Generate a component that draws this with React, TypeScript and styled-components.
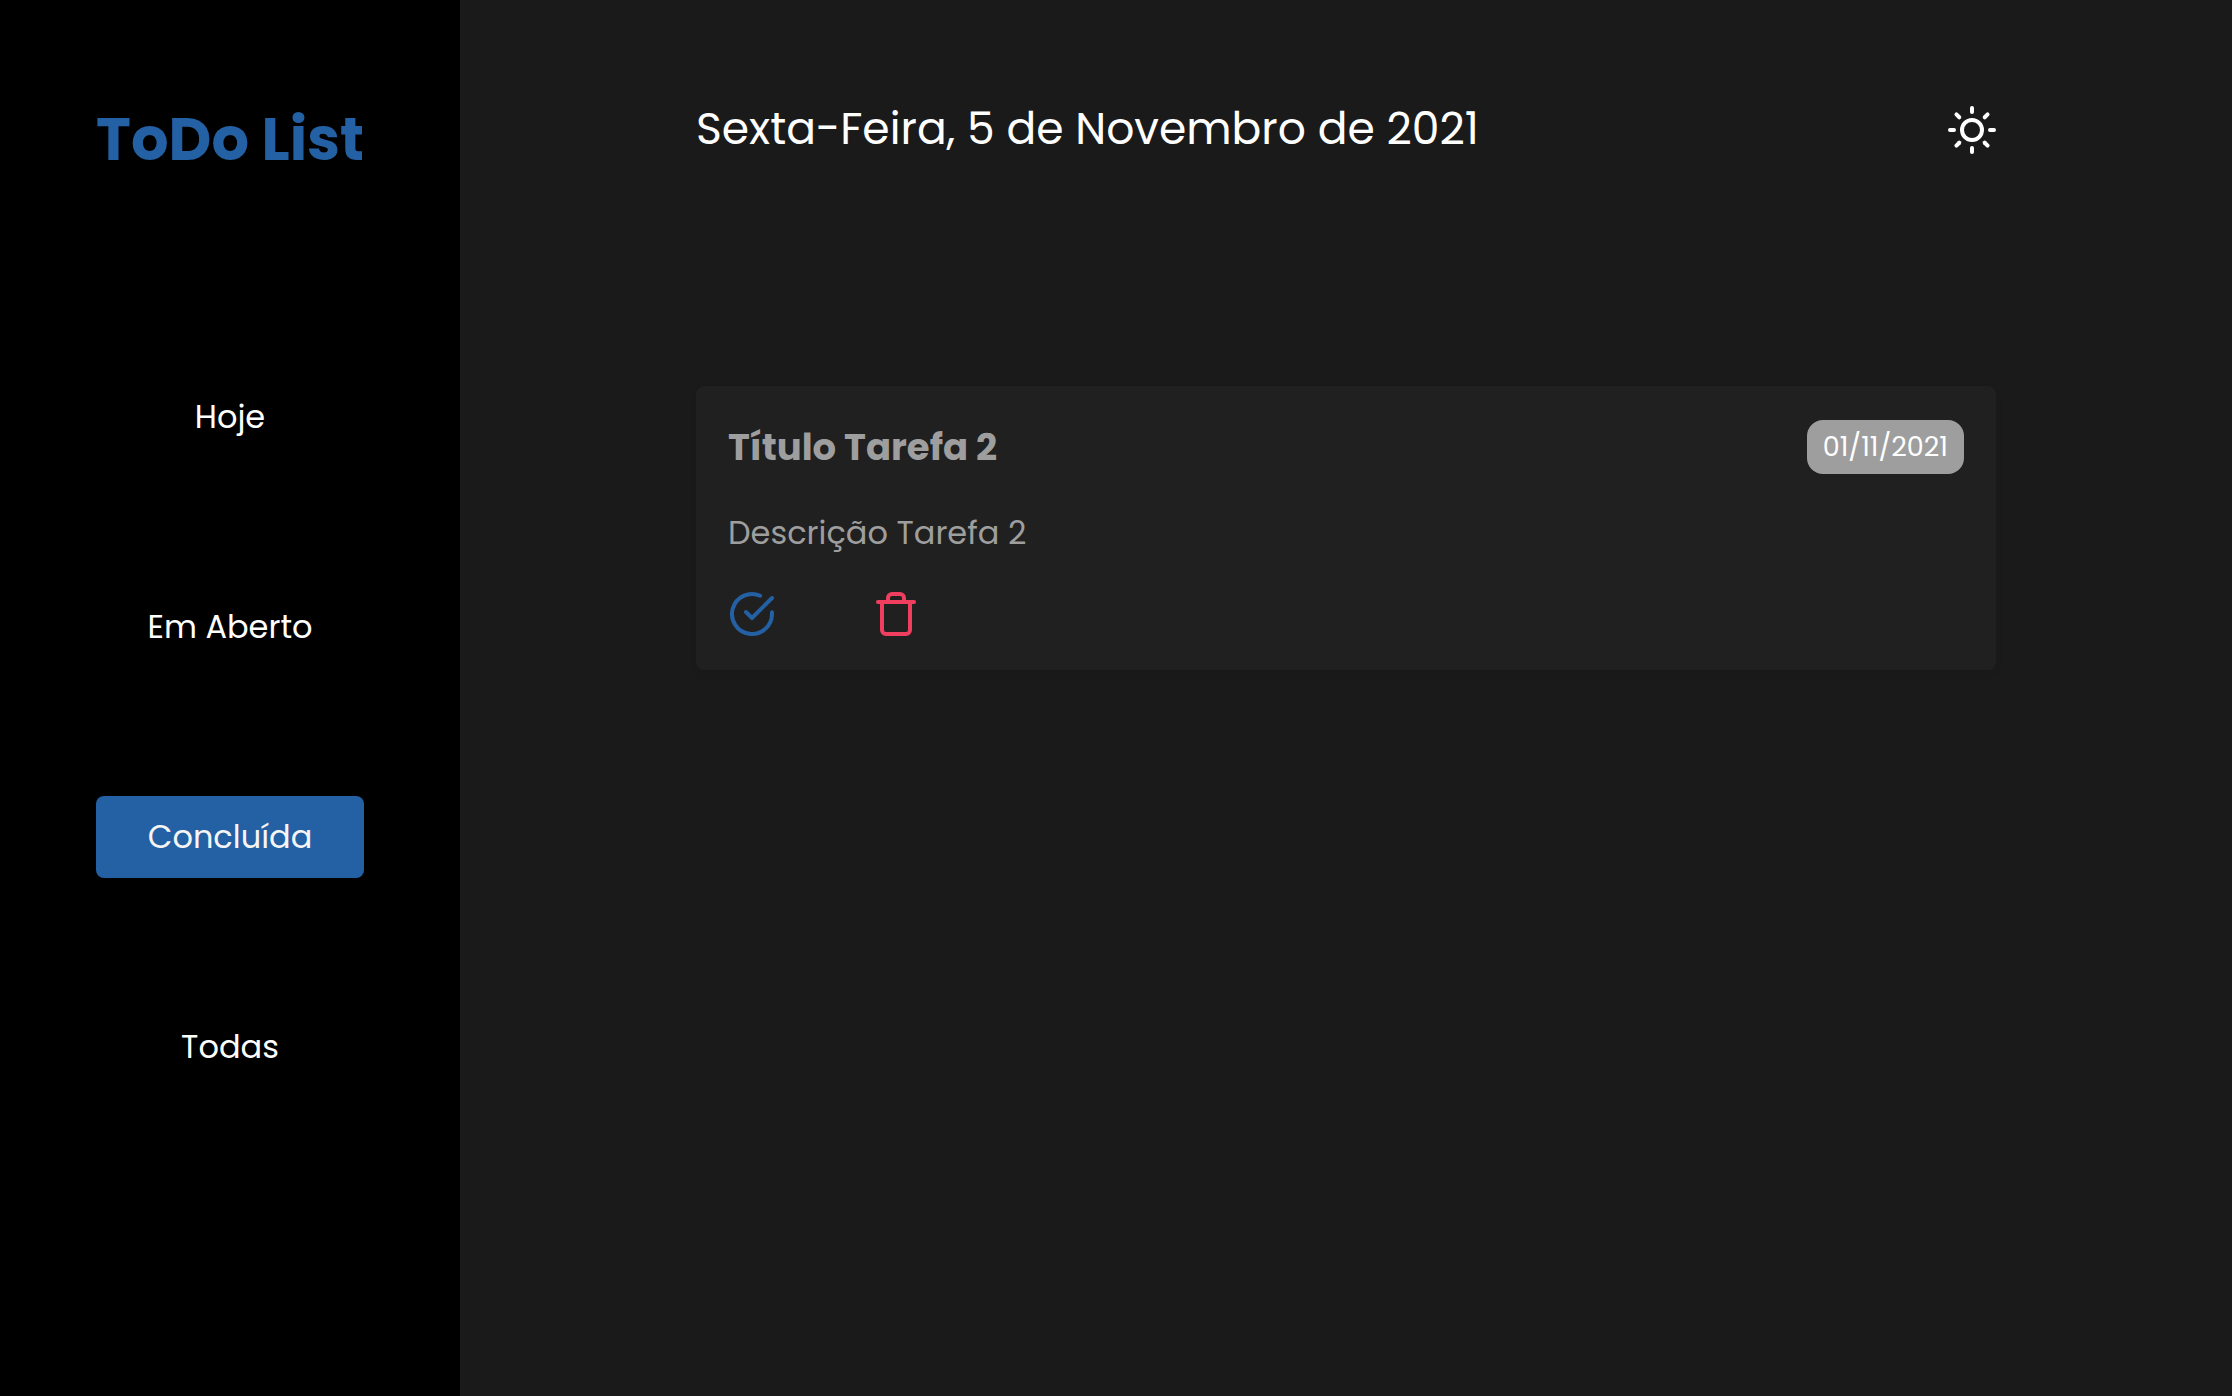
import React, { useState } from "react";
import styled, { createGlobalStyle } from "styled-components";
import { FiCheckCircle, FiSun, FiTrash } from "react-icons/fi";

const GlobalStyle = createGlobalStyle`
  * {
    margin: 0;
    padding: 0;
    box-sizing: border-box;
  }

  body {
    background: #1a1a1a;
    color: #ffffff;
    font-family: Poppins, Inter, "Open Sans", sans-serif;
    font-size: 32px;
  }

  button {
    border: 0;
    background: none;
    color: inherit;
    font: inherit;
    cursor: pointer;
  }
`;

const Layout = styled.div`
  display: grid;
  grid-template-columns: 460px 1fr;
  min-height: 100vh;
`;

const Sidebar = styled.aside`
  padding: 96px;
  background: #000000;
`;

const Brand = styled.h1`
  color: #2460a4;
  font-size: 59px;
  font-weight: 700;
  line-height: 88px;
  text-align: center;
  white-space: nowrap;
`;

const Nav = styled.nav`
  display: flex;
  flex-direction: column;
  gap: 128px;
  margin-top: 192px;
`;

const NavButton = styled.button<{ $active: boolean }>`
  width: 100%;
  height: 82px;
  border-radius: 8px;
  line-height: 48px;
  white-space: nowrap;
  color: ${({ $active }) => ($active ? "#f5f5f5" : "#ffffff")};
  background: ${({ $active }) => ($active ? "#2460a4" : "transparent")};
`;

const Content = styled.main`
  width: 100%;
  max-width: 1364px;
  margin: 0 auto;
  padding: 96px 32px;
`;

const Header = styled.header`
  display: flex;
  align-items: flex-start;
  justify-content: space-between;
  margin-bottom: 224px;
`;

const Today = styled.p`
  font-size: 44px;
  line-height: 66px;
`;

const IconButton = styled.button`
  display: flex;
  width: 48px;
  height: 48px;

  svg {
    width: 48px;
    height: 48px;
  }
`;

const ThemeButton = styled(IconButton)`
  margin-top: 10px;
`;

const DoneButton = styled(IconButton)`
  color: #2460a4;
`;

const DeleteButton = styled(IconButton)`
  color: #f03e5f;
`;

const TaskCard = styled.article`
  display: flex;
  flex-direction: column;
  gap: 33px;
  padding: 32px;
  border-radius: 8px;
  background: #202020;
  box-shadow: 0 4px 8px rgba(0, 0, 0, 0.05);
`;

const TaskHeader = styled.div`
  display: flex;
  align-items: center;
  justify-content: space-between;
`;

const TaskTitle = styled.h2`
  color: #9e9e9e;
  font-size: 37px;
  font-weight: 700;
  line-height: 58px;
`;

const DueDate = styled.time`
  padding: 0 16px;
  border-radius: 16px;
  background: #9e9e9e;
  font-size: 27px;
  font-weight: 400;
  line-height: 54px;
`;

const Description = styled.p`
  color: #9e9e9e;
  line-height: 48px;
`;

const Actions = styled.div`
  display: flex;
  gap: 96px;
`;

const filters = ["Hoje", "Em Aberto", "Concluída", "Todas"];

export default function App() {
  const [filter, setFilter] = useState("Concluída");

  return (
    <>
      <GlobalStyle />
      <Layout>
        <Sidebar>
          <Brand>ToDo List</Brand>
          <Nav>
            {filters.map((name) => (
              <NavButton
                key={name}
                type="button"
                $active={name === filter}
                aria-pressed={name === filter}
                onClick={() => setFilter(name)}
              >
                {name}
              </NavButton>
            ))}
          </Nav>
        </Sidebar>
        <Content>
          <Header>
            <Today>Sexta-Feira, 5 de Novembro de 2021</Today>
            <ThemeButton type="button" aria-label="Alternar tema">
              <FiSun />
            </ThemeButton>
          </Header>
          <TaskCard>
            <TaskHeader>
              <TaskTitle>Título Tarefa 2</TaskTitle>
              <DueDate dateTime="2021-11-01">01/11/2021</DueDate>
            </TaskHeader>
            <Description>Descrição Tarefa 2</Description>
            <Actions>
              <DoneButton type="button" aria-label="Concluir tarefa">
                <FiCheckCircle />
              </DoneButton>
              <DeleteButton type="button" aria-label="Excluir tarefa">
                <FiTrash />
              </DeleteButton>
            </Actions>
          </TaskCard>
        </Content>
      </Layout>
    </>
  );
}
